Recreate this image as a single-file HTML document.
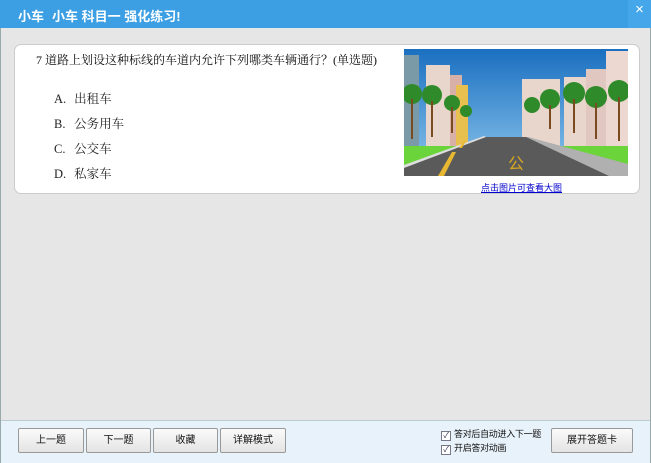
<!DOCTYPE html>
<html><head><meta charset="utf-8"><style>
body{margin:0;width:651px;height:463px;overflow:hidden;background:#e6e6e6;font-family:"Liberation Sans","Noto Sans CJK SC",sans-serif;position:relative}
.title{position:absolute;left:0;top:0;width:651px;height:28px;background:#3c9fe3;color:#fff;font-size:13px;font-weight:bold}
.title span{position:absolute;top:6px}
.close{position:absolute;right:0;top:0;width:23px;height:28px;background:#45a7ea;color:#fff;font-size:15px;text-align:center;line-height:20px;font-weight:normal}
.frame{position:absolute;left:0;top:28px;width:649px;height:434px;border:1px solid #9aa;border-top:none}
.card{position:absolute;left:14px;top:44px;width:624px;height:148px;background:#fff;border:1px solid #ccc;border-radius:7px}
.q{position:absolute;left:36px;top:51px;font-size:12px;color:#111;font-family:"Liberation Serif","Noto Serif CJK SC",serif}
.opt{position:absolute;left:54px;font-size:12.5px;color:#222;font-family:"Liberation Serif","Noto Serif CJK SC",serif}
.opt b{font-weight:normal;display:inline-block;width:17px}
.link{position:absolute;left:481px;top:181px;font-size:9px;color:#00c;text-decoration:underline}
.bottom{position:absolute;left:1px;top:420px;width:649px;height:42px;background:#e8f2fa;border-top:1px solid #bcc}
.btn{position:absolute;top:428px;height:23px;border:1px solid #999;border-radius:2px;background:linear-gradient(#fbfbfb,#e4e4e4);font-size:10px;text-align:center;line-height:23px;color:#111}
.cb{position:absolute;left:441px;font-size:9px;color:#111;letter-spacing:-0.3px}
.cb i{display:inline-block;width:8px;height:8px;border:1px solid #778;background:#fff;vertical-align:-1px;margin-right:3px;font-style:normal;font-size:8px;line-height:8px;color:#335;text-align:center}
</style></head><body>
<div class="title"><span style="left:18px">小车</span><span style="left:52px">小车 科目一 强化练习!</span><div class="close">×</div></div>
<div class="frame"></div>
<div class="card"></div>
<div class="q">7 道路上划设这种标线的车道内允许下列哪类车辆通行？(单选题)</div>
<div class="opt" style="top:89px"><b>A.</b> 出租车</div>
<div class="opt" style="top:114px"><b>B.</b> 公务用车</div>
<div class="opt" style="top:139px"><b>C.</b> 公交车</div>
<div class="opt" style="top:164px"><b>D.</b> 私家车</div>
<svg style="position:absolute;left:404px;top:49px" width="224" height="127" viewBox="0 0 224 127">
<defs><linearGradient id="s" x1="0" y1="0" x2="0" y2="1"><stop offset="0" stop-color="#1a6fc0"/><stop offset="1" stop-color="#8fc8ee"/></linearGradient></defs>
<rect width="224" height="127" fill="url(#s)"/>
<rect x="0" y="6" width="15" height="100" fill="#7a9aa8"/>
<rect x="22" y="16" width="24" height="90" fill="#e8d6cc"/>
<rect x="46" y="26" width="12" height="80" fill="#d8b0a8"/>
<rect x="52" y="36" width="12" height="70" fill="#e8c050"/>
<rect x="160" y="28" width="22" height="80" fill="#e8d6cc"/>
<rect x="182" y="20" width="20" height="88" fill="#e0c8c0"/>
<rect x="202" y="2" width="22" height="106" fill="#ecd8d0"/>
<rect x="118" y="30" width="38" height="78" fill="#e8d6cc"/>
<polygon points="0,97 224,97 224,127 0,127" fill="#6ad43a"/>
<polygon points="0,118 80,88 124,88 224,127 0,127" fill="#5a5a5a"/>
<polygon points="0,116 80,87 82,88 0,119" fill="#ddd"/>
<polygon points="124,88 224,115 224,127 205,127 122,88" fill="#b0b0b0"/>
<polygon points="48,103 52,103 40,127 34,127" fill="#e8b830"/>
<polygon points="60,92 62,92 58,99 55,99" fill="#e8b830"/>
<text x="104" y="120" font-size="16" fill="#d8a820" font-family="Noto Sans CJK SC">公</text>
<g fill="#2f8a2a"><circle cx="8" cy="45" r="10"/><circle cx="28" cy="46" r="10"/><circle cx="48" cy="54" r="8"/><circle cx="62" cy="62" r="6"/><circle cx="128" cy="56" r="8"/><circle cx="146" cy="50" r="10"/><circle cx="170" cy="44" r="11"/><circle cx="192" cy="48" r="11"/><circle cx="215" cy="42" r="11"/></g>
<g fill="#7a4a20"><rect x="7" y="50" width="2" height="40"/><rect x="27" y="52" width="2" height="36"/><rect x="47" y="58" width="2" height="26"/><rect x="145" y="56" width="2" height="24"/><rect x="169" y="50" width="2" height="34"/><rect x="191" y="54" width="2" height="36"/><rect x="214" y="48" width="2" height="44"/></g>
</svg>
<div class="link">点击图片可查看大图</div>
<div class="bottom"></div>
<div class="btn" style="left:18px;width:64px">上一题</div>
<div class="btn" style="left:86px;width:63px">下一题</div>
<div class="btn" style="left:153px;width:63px">收藏</div>
<div class="btn" style="left:220px;width:64px">详解模式</div>
<div class="cb" style="top:427px"><i>✓</i>答对后自动进入下一题</div>
<div class="cb" style="top:441px"><i>✓</i>开启答对动画</div>
<div class="btn" style="left:551px;width:80px">展开答题卡</div>
</body></html>
